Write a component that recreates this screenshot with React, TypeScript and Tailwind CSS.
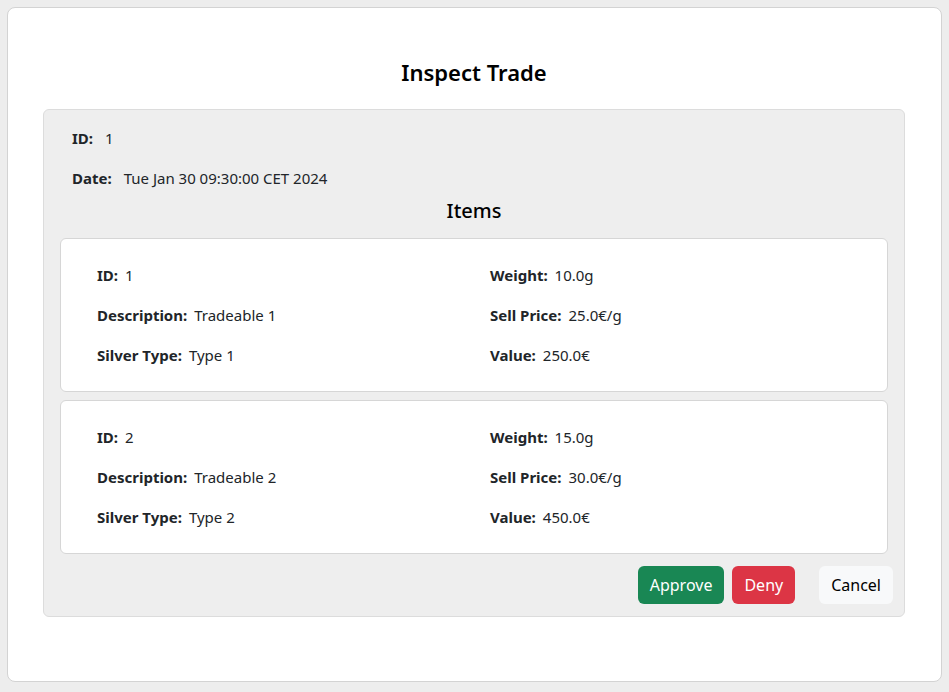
import React from "react";

type Item = {
  id: number;
  description: string;
  silverType: string;
  weight: string;
  sellPrice: string;
  value: string;
};

const items: Item[] = [
  { id: 1, description: "Tradeable 1", silverType: "Type 1", weight: "10.0g", sellPrice: "25.0€/g", value: "250.0€" },
  { id: 2, description: "Tradeable 2", silverType: "Type 2", weight: "15.0g", sellPrice: "30.0€/g", value: "450.0€" },
];

function Field({ label, value, gap = "gap-[7px]" }: { label: string; value: string | number; gap?: string }) {
  return (
    <div className={`h-[40px] flex items-center ${gap}`}>
      <span className="font-bold">{label}</span>
      <span>{value}</span>
    </div>
  );
}

function ItemCard({ item }: { item: Item }) {
  return (
    <div className="bg-white border border-[#d6d6d6] rounded-[6px] py-[16px] pl-[36px] grid grid-cols-[393px_1fr]">
      <div>
        <Field label="ID:" value={item.id} />
        <Field label="Description:" value={item.description} />
        <Field label="Silver Type:" value={item.silverType} />
      </div>
      <div>
        <Field label="Weight:" value={item.weight} />
        <Field label="Sell Price:" value={item.sellPrice} />
        <Field label="Value:" value={item.value} />
      </div>
    </div>
  );
}

export default function App() {
  return (
    <div
      className="min-h-screen bg-[#ededed] p-[7px] text-[15px] text-[#212529]"
      style={{ fontFamily: '"Segoe UI", "Noto Sans", "Open Sans", sans-serif' }}
    >
      <div className="bg-white border border-[#d3d3d3] rounded-[8px] h-[675px] pl-[35px] pr-[36px] pt-[48px]">
        <h1 className="text-center text-[22px] font-semibold leading-[32px] text-black">Inspect Trade</h1>
        <div className="mt-[21px] bg-[#eeeeee] border border-[#dcdcdc] rounded-[6px] pt-[8px] pb-[12px]">
          <div className="px-[28px]">
            <Field label="ID:" value={1} gap="gap-[12px]" />
            <Field label="Date:" value="Tue Jan 30 09:30:00 CET 2024" gap="gap-[12px]" />
          </div>
          <h2 className="text-center text-[20px] font-medium leading-[26px] text-black">Items</h2>
          <div className="mx-[16px] mt-[14px] flex flex-col gap-[8px]">
            {items.map((it) => (
              <ItemCard key={it.id} item={it} />
            ))}
          </div>
          <div className="mt-[12px] pr-[11px] flex justify-end">
            <button className="h-[38px] px-[12px] rounded-[6px] bg-[#198754] text-white text-[16px]">Approve</button>
            <button className="ml-[8px] h-[38px] px-[12px] rounded-[6px] bg-[#dc3545] text-white text-[16px]">Deny</button>
            <button className="ml-[24px] h-[38px] px-[12px] rounded-[6px] bg-[#f8f9fa] text-black text-[16px]">Cancel</button>
          </div>
        </div>
      </div>
    </div>
  );
}
